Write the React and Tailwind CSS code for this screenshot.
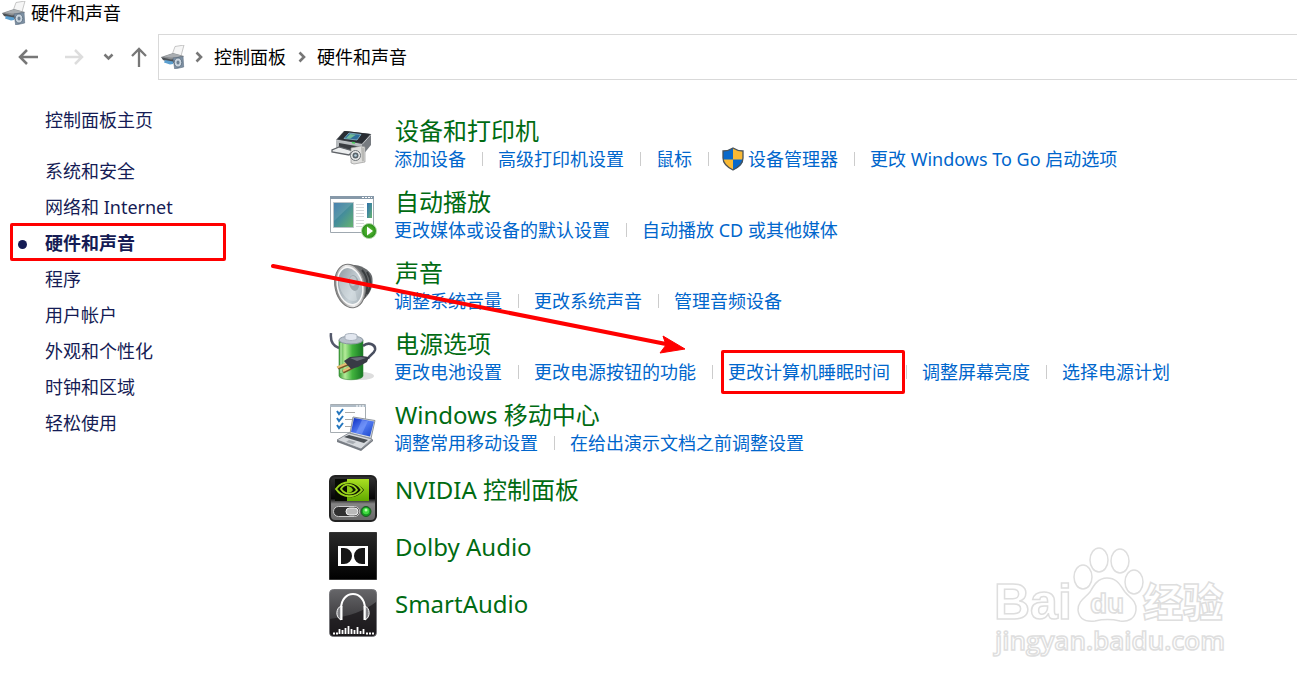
import React from 'react';
import clsx from 'clsx';

const SIDEBAR = ['系统和安全', '网络和 Internet', '硬件和声音', '程序', '用户帐户', '外观和个性化', '时钟和区域', '轻松使用'];
const ACTIVE = '硬件和声音';

// ─── Icons ───────────────────────────────────────────────────────────────────
const HardwareIcon = () => (
  <svg className="w-6 h-6 shrink-0" viewBox="0 0 24 24" aria-hidden="true">
    <path d="M14 1.500 23 0l-3 11-9-1z" fill="#f6f6f6" stroke="#b0b0b0" strokeWidth=".7" />
    <path d="m0 12 12-4 11 3-3 4-10 1z" fill="#8b8e91" />
    <path d="m0 12 10 2.500 10-1.500v4l-10 1-8-3z" fill="#4c5156" />
    <path d="m3 11.500 9-3 8 2-3 1.500-7 .5z" fill="#a9adb1" />
    <path d="m4 15 8 1.500V19l-3 .5-6-2z" fill="#5b9fd0" />
    <path d="m12 13 10-1.500.7 10.500-9 2z" fill="#7e91a4" stroke="#5f7183" strokeWidth=".6" />
    <ellipse cx="17" cy="17.500" rx="3.800" ry="4.600" fill="#c9d4de" stroke="#526375" strokeWidth=".8" />
    <ellipse cx="17" cy="17.500" rx="1.500" ry="2" fill="#6d7f91" />
  </svg>
);

const PrinterIcon = () => (
  <svg className="w-12 h-12" viewBox="0 0 48 48" aria-hidden="true">
    <path d="m7 20 8-9h2l25 3v3l-9 9z" fill="#44484d" />
    <path d="m9 19 7-8 25 3-8 9z" fill="#292d33" />
    <path d="m20 13 12 1.500-4 5.500-13-1.500z" fill="#2f6f9c" stroke="#9bc7d9" strokeWidth=".7" />
    <path d="m21 14 6 .7-6 4-4-.5z" fill="#72bb99" />
    <path d="m7 20 26 4.500V36L7 31z" fill="#b6babd" />
    <path d="m10 23 20 3.500V34l-20-4z" fill="#3a3d41" />
    <path d="m33 24.500 9-10V25l-9 11z" fill="#777b80" />
    <path d="m10 27-7 3v2l17 3 4-4z" fill="#eceeef" stroke="#5f6368" strokeWidth="1.300" />
    <path d="m7 20 26 4.500 9-10" fill="none" stroke="#c4c7ca" />
    <path d="m23 22.500 3 .5" stroke="#43ce54" strokeWidth="1.500" />
    <path d="m22 28 10-2 4 1v15l-11 2-3-1z" fill="#dededc" stroke="#999" strokeWidth=".7" />
    <path d="m32 27 3 1v13l-2 .6z" fill="#b9b9b6" />
    <circle cx="26.500" cy="35.500" r="5" fill="#eee" stroke="#6f7478" />
    <circle cx="26.500" cy="35.500" r="3" fill="#5a646b" />
    <circle cx="26.500" cy="35.500" r="1.300" fill="#b9d0dd" />
  </svg>
);

const AutoPlayIcon = () => (
  <svg className="w-12 h-12" viewBox="0 0 48 48" aria-hidden="true">
    <defs>
      <linearGradient id="apScreen" x1="0" y1="0" x2="1" y2="1">
        <stop offset="0" stopColor="#2f70a5" /><stop offset=".5" stopColor="#468f99" /><stop offset="1" stopColor="#67b56c" />
      </linearGradient>
      <radialGradient id="apPlay"><stop offset="0" stopColor="#68c63d" /><stop offset="1" stopColor="#258c17" /></radialGradient>
    </defs>
    <path d="M1.500 5.500h43v36h-43z" fill="#fff" stroke="#9fa8b0" />
    <path d="M1 5h44v3H1z" fill="#8799a9" />
    <path d="M33 6.500h10" stroke="#fff" strokeDasharray="2 1" />
    <path d="M4.500 11.500h20v25h-20z" fill="url(#apScreen)" stroke="#b9c4ca" />
    <path d="M5 12h19L5 30z" fill="#fff" opacity=".12" />
    <path d="M27 13.500h8M27 16.500h8M27 19.500h8M27 22.500h8M27 25.500h8M27 29.500h8M27 32.500h8M27 35.500h6" stroke="#d6d9db" />
    <path d="M38 12h5v15h-5z" fill="url(#apScreen)" />
    <circle cx="40" cy="40" r="7.500" fill="url(#apPlay)" stroke="#b5d6a9" />
    <path d="m38 35.500 6 4.500-6 4.500z" fill="#fff" />
  </svg>
);

const SpeakerIcon = () => (
  <svg className="w-12 h-12" viewBox="0 0 48 48" aria-hidden="true">
    <defs>
      <linearGradient id="spRim"><stop offset="0" stopColor="#818181" /><stop offset=".5" stopColor="#eee" /><stop offset="1" stopColor="#999" /></linearGradient>
      <linearGradient id="spCone" x1="0" y1="0" x2="1" y2="1"><stop offset="0" stopColor="#879198" /><stop offset=".6" stopColor="#c6d0d6" /><stop offset="1" stopColor="#a0abb1" /></linearGradient>
    </defs>
    <path d="M20 3c10-1 20 4 23 11 2 8-1 18-9 24l-8 5z" fill="#686b6d" />
    <path d="M33 8c7 8 7 20 1 29M38 10c5 8 4 16 0 22" fill="none" stroke="#3b3e40" strokeWidth="2" />
    <ellipse cx="21" cy="24" rx="15" ry="22" transform="rotate(-12 21 24)" fill="url(#spRim)" stroke="#777" />
    <ellipse cx="21" cy="24" rx="12.500" ry="19" transform="rotate(-12 21 24)" fill="url(#spCone)" stroke="#f7f7f7" strokeWidth="1.500" />
    <path d="m10 15 15 8 3 15c-9 5-20-10-18-23z" fill="#e3eaee" opacity=".4" />
    <ellipse cx="25" cy="21" rx="5" ry="8" transform="rotate(-12 25 21)" fill="#9ea8ae" />
    <ellipse cx="24" cy="19" rx="3.500" ry="5" fill="#bdc5ca" />
  </svg>
);

const BatteryIcon = () => (
  <svg className="w-12 h-12" viewBox="0 0 48 48" aria-hidden="true">
    <defs>
      <linearGradient id="batBody"><stop offset="0" stopColor="#399c34" /><stop offset=".25" stopColor="#b5eb9a" /><stop offset=".55" stopColor="#42b43e" /><stop offset="1" stopColor="#167623" /></linearGradient>
    </defs>
    <ellipse cx="32" cy="43" rx="13" ry="4" fill="#ddd" />
    <path d="M2 0c-1 9 2 13 8 15" fill="none" stroke="#54596b" strokeWidth="2.500" />
    <path d="M10 7v36c1 5 23 5 24 0V7z" fill="url(#batBody)" stroke="#388837" strokeWidth=".6" />
    <ellipse cx="22" cy="7" rx="12" ry="4" fill="#b8c1cb" stroke="#8c98a3" />
    <path d="M16 6V2c2-2 10-2 12 0v4c-3 2-9 2-12 0z" fill="#e2e7ef" stroke="#a9b2bd" />
    <path d="M12 10v30" stroke="#c8f3b7" strokeWidth="1.500" opacity=".7" />
    <path d="M34 13c6-5 13-1 12 4-1 4-6 5-7 9" fill="none" stroke="#4a4f60" strokeWidth="2.500" />
    <path d="m19 31-10 4M24 34l-10 5" stroke="#785527" strokeWidth="3.500" />
    <path d="m19 30-11 4.500M24 33l-10 5" stroke="#e5bd75" strokeWidth="2" />
    <path d="m15 28 6-4 12-1 7 1-2 5-9 5-7 2z" fill="#383b45" />
    <path d="m21 25 11-1 5 1-9 3z" fill="#696e79" />
  </svg>
);

const MobilityIcon = () => (
  <svg className="w-12 h-12" viewBox="0 0 48 48" aria-hidden="true">
    <defs>
      <linearGradient id="mobScreen" x1="0" y1="0" x2="1" y2="1"><stop offset="0" stopColor="#092bc0" /><stop offset=".5" stopColor="#527af1" /><stop offset="1" stopColor="#1744c9" /></linearGradient>
    </defs>
    <path d="M1.500.500h35v28h-35z" fill="#fff" stroke="#a6adb2" />
    <path d="M1 1h36v2H1z" fill="#aebbc6" />
    <path d="M27 2h8" stroke="#fff" strokeDasharray="2 1" />
    <path d="M16 8.500h10M16 15.500h9M16 22.500h7" stroke="#aaa" />
    <path d="m8 7 2 3 4-5M8 14l2 3 4-5M8 21l2 3 4-5" fill="none" stroke="#2476be" strokeWidth="2" />
    <path d="m24 13 22 3.500-4 18-21-5z" fill="#d5d9df" stroke="#8e959d" />
    <path d="m25 14 20 3.500-4 15L22 28z" fill="url(#mobScreen)" />
    <path d="m33 16 6 1-6 13-6-1.300z" fill="#91adff" opacity=".45" />
    <path d="m20 29 23 6-11 10L8 36z" fill="#d6d9dd" stroke="#8c9198" />
    <path d="m20 31 19 5-4 3-20-6z" fill="#4b5056" />
    <path d="m20 36 7 2-3 2-7-2z" fill="#a7acb2" />
    <path d="m8 36 24 9 12-10v2L32 47 8 38z" fill="#777c83" />
  </svg>
);

const NvidiaIcon = () => (
  <svg className="w-12 h-12" viewBox="0 0 48 48" aria-hidden="true">
    <defs>
      <linearGradient id="nvBase" x1="0" y1="0" x2="0" y2="1"><stop offset="0" stopColor="#333" /><stop offset=".5" stopColor="#050505" /><stop offset=".62" stopColor="#858585" /><stop offset="1" stopColor="#666" /></linearGradient>
      <linearGradient id="nvGreen" x1="0" y1="0" x2="0" y2="1"><stop offset="0" stopColor="#a9df22" /><stop offset="1" stopColor="#62a900" /></linearGradient>
    </defs>
    <rect x="1" y="1" width="46" height="45" rx="5" fill="url(#nvBase)" stroke="#222" strokeWidth="2" />
    <path d="M6 4h34v22H6z" fill="#070b03" />
    <path d="M18 4h22v22H18z" fill="url(#nvGreen)" />
    <path d="M7 14c7-8 19-9 27 1-7 10-19 9-27-1z" fill="#080d03" />
    <path d="M18 8c7-1 12 1 17 7-5 6-11 8-17 7z" fill="#0c1403" />
    <path d="M7 14c7-9 20-9 26 1-7 9-20 8-26-1z" fill="none" stroke="#9bd41c" strokeWidth="2" />
    <path d="M12 14c3-6 12-6 16 1-4 5-12 5-16-1z" fill="none" stroke="#9bd41c" strokeWidth="1.800" />
    <path d="M18 11c3 0 5 2 6 4-1 2-3 3-6 3z" fill="#8ac814" />
    <rect x="4.500" y="31.500" width="26" height="10" rx="5" fill="#303030" stroke="#ccc" />
    <rect x="17" y="33" width="12" height="7" rx="3.500" fill="#bababa" stroke="#f6f6f6" />
    <circle cx="37" cy="36.500" r="5" fill="#159822" stroke="#1d5922" />
    <circle cx="37" cy="36" r="3.200" fill="#42da41" />
    <circle cx="37" cy="35" r="1.500" fill="#b6ffad" />
  </svg>
);

const DolbyIcon = () => (
  <svg className="w-12 h-12" viewBox="0 0 48 48" aria-hidden="true">
    <defs><linearGradient id="dolby" x1="0" y1="0" x2="0" y2="1"><stop offset="0" stopColor="#292929" /><stop offset="1" stopColor="#000" /></linearGradient></defs>
    <path d="M.5.500h47v47H.5z" fill="url(#dolby)" stroke="#333" />
    <path d="M9 14h30v20H9z" fill="#fff" />
    <path d="M12 16h3a8 8 0 0 1 0 16h-3zM36 16h-3a8 8 0 0 0 0 16h3z" fill="#151515" />
  </svg>
);

const SmartAudioIcon = () => (
  <svg className="w-12 h-12" viewBox="0 0 48 48" aria-hidden="true">
    <defs><linearGradient id="smart" x1="0" y1="0" x2="0" y2="1"><stop offset="0" stopColor="#666669" /><stop offset="1" stopColor="#252326" /></linearGradient></defs>
    <rect x=".5" y=".5" width="47" height="47" rx="4" fill="url(#smart)" stroke="#77777b" />
    <path d="M47 13c-12 9-25 14-46 17v13c0 3 1 4 4 4h38c3 0 4-2 4-4z" fill="#151316" opacity=".65" />
    <path d="M12 20C12 0 36 0 36 20" fill="none" stroke="#fff" strokeWidth="2" />
    <path d="M12 17c-5 2-6 11 0 14zM36 17c5 2 6 11 0 14z" fill="#828286" stroke="#fff" />
    <path d="M12.500 17v14M35.500 17v14" stroke="#fff" strokeWidth="2" />
    <path d="M4 44.500h2M7 44.500h2M10.500 45v-5M13.500 45v-4M16.500 45v-6M19.500 45v-8M22.500 45v-5M25.500 45v-4M28.500 45v-7M31.500 45v-3M34.500 45v-5M37 44.500h2M40 44.500h2M43 44.500h2" stroke="#fff" strokeWidth="1.800" />
  </svg>
);

const ShieldIcon = () => (
  <svg className="w-6 h-6 shrink-0 overflow-visible" viewBox="2 0 24 24" aria-hidden="true">
    <path d="M11 1c3 2 6 3 10 3v7c0 6-4 9-10 12C5 20 1 17 1 11V4c4 0 7-1 10-3z" fill="#f9b934" />
    <path d="M11 1v11.500H1V4c4 0 7-1 10-3zM11 12.500h10c0 5-4 8-10 10.500z" fill="#0868ca" />
    <path d="M11 1c3 2 6 3 10 3v7c0 6-4 9-10 12C5 20 1 17 1 11V4c4 0 7-1 10-3z" fill="none" stroke="#49525a" strokeWidth="1.300" />
  </svg>
);

const Chevron = () => (
  <svg className="w-2 h-3 shrink-0" viewBox="0 0 8 12" aria-hidden="true">
    <path d="m1.500 1.500 4.500 4.500-4.500 4.500" fill="none" stroke="#777" strokeWidth="2.600" />
  </svg>
);

const CATEGORIES = [
  { title: '设备和打印机', Icon: PrinterIcon, links: [{ label: '添加设备' }, { label: '高级打印机设置' }, { label: '鼠标' }, { label: '设备管理器', shield: true }, { label: '更改 Windows To Go 启动选项' }] },
  { title: '自动播放', Icon: AutoPlayIcon, links: [{ label: '更改媒体或设备的默认设置' }, { label: '自动播放 CD 或其他媒体' }] },
  { title: '声音', Icon: SpeakerIcon, links: [{ label: '调整系统音量' }, { label: '更改系统声音' }, { label: '管理音频设备' }] },
  { title: '电源选项', Icon: BatteryIcon, links: [{ label: '更改电池设置' }, { label: '更改电源按钮的功能' }, { label: '更改计算机睡眠时间', marked: true }, { label: '调整屏幕亮度' }, { label: '选择电源计划' }] },
  { title: 'Windows 移动中心', Icon: MobilityIcon, links: [{ label: '调整常用移动设置' }, { label: '在给出演示文档之前调整设置' }] },
];

const APPS = [
  { title: 'NVIDIA 控制面板', Icon: NvidiaIcon },
  { title: 'Dolby Audio', Icon: DolbyIcon },
  { title: 'SmartAudio', Icon: SmartAudioIcon },
];

const Category = ({ title, Icon, links }) => (
  <section className="flex gap-[17px]">
    <div className="pt-1 h-[58px] shrink-0"><Icon /></div>
    <div>
      <h2 className="pl-px text-2xl leading-[30px] text-[#006b12]"><a href="#" className="hover:underline">{title}</a></h2>
      <ul className="flex items-center h-[26px]">
        {links.map(({ label, shield, marked }, i) => (
          <li key={label} className="flex items-center whitespace-nowrap">
            {i > 0 && <span className="w-px h-[14px] ml-4 mr-[15px] bg-[#ccc]" />}
            <a href="#" className="relative flex items-center text-[#0066cc] hover:underline">
              {shield && <ShieldIcon />}
              {label}
              {marked && <span className="absolute -left-[7px] -right-[15px] -top-2 -bottom-2 border-3 border-[#ff0000] rounded-xs" />}
            </a>
          </li>
        ))}
      </ul>
    </div>
  </section>
);

// ─── Corner watermark ────────────────────────────────────────────────────────
const Watermark = () => (
  <svg className="absolute top-[545px] right-[56px] w-[250px] h-[116px]" viewBox="0 0 250 116" fill="#fff" stroke="#dedede" strokeWidth="1.500" role="img" aria-label="Baidu 经验">
    <ellipse cx="92" cy="32" rx="9" ry="12" />
    <ellipse cx="108" cy="15" rx="9" ry="12" />
    <ellipse cx="129" cy="16" rx="9" ry="12" />
    <ellipse cx="143" cy="37" rx="9" ry="12" />
    <path d="M116 33c10 0 13 7 18 14 5 6 12 9 11 18-1 9-8 12-16 11-9-2-16-2-25 0-9 1-16-2-17-11 0-9 7-12 12-18 4-7 8-14 17-14z" />
    <text x="3" y="74" fontFamily="Liberation Sans" fontWeight="700" fontSize="50">Bai</text>
    <text x="99" y="68" fontFamily="Liberation Sans" fontWeight="700" fontSize="28">du</text>
    <text x="152" y="72" fontFamily="Noto Sans CJK SC" fontWeight="900" fontSize="40">经验</text>
    <text x="4" y="105" fontFamily="Open Sans" fontWeight="600" fontSize="26">jingyan.baidu.com</text>
  </svg>
);

export default function App() {
  return (
    <div className="relative min-h-screen overflow-hidden bg-white text-lg leading-7 font-['Noto_Sans','Noto_Sans_CJK_SC',sans-serif]">

      {/* Title bar */}
      <header className="flex items-center gap-[5px] h-[26px] pl-0.5 text-black">
        <HardwareIcon />
        <h1>硬件和声音</h1>
      </header>

      {/* Navigation + address bar */}
      <div className="flex pt-2">
        <nav className="flex items-center w-[158px] shrink-0 pl-[18px] text-[#777]">
          <button type="button" aria-label="后退">
            <svg className="w-5 h-5" viewBox="0 0 20 20" fill="none" stroke="currentColor" strokeWidth="2.500"><path d="M20 10H2M9 3l-7 7 7 7" /></svg>
          </button>
          <button type="button" aria-label="前进" className="ml-[26px] text-[#ddd]">
            <svg className="w-5 h-5" viewBox="0 0 20 20" fill="none" stroke="currentColor" strokeWidth="2.500"><path d="M1 10h17M11 3l7 7-7 7" /></svg>
          </button>
          <button type="button" aria-label="最近的位置" className="ml-[19px]">
            <svg className="w-[11px] h-5" viewBox="0 0 11 20" fill="none" stroke="currentColor" strokeWidth="2.500"><path d="m1.500 7.500 4 4 4-4" /></svg>
          </button>
          <button type="button" aria-label="向上" className="ml-4">
            <svg className="w-[18px] h-5" viewBox="0 0 18 20" fill="none" stroke="currentColor" strokeWidth="2.300"><path d="M9 20V2M2 9l7-7 7 7" /></svg>
          </button>
        </nav>
        <div className="flex items-center flex-1 h-[46px] pl-0.5 border border-r-0 border-[#d9d9d9] text-black">
          <HardwareIcon />
          <span className="flex ml-[10px] mr-[11px]"><Chevron /></span>
          <a href="#">控制面板</a>
          <span className="flex ml-3 mr-[11px]"><Chevron /></span>
          <a href="#">硬件和声音</a>
        </div>
      </div>

      <div className="flex">
        {/* Sidebar */}
        <aside className="w-[329px] shrink-0 pt-[26px] pl-[45px] text-[#151c55]">
          <a href="#" className="block">控制面板主页</a>
          <ul className="flex flex-col gap-2 pt-[23px]">
            {SIDEBAR.map(item => (
              <li key={item} className={clsx('relative', item === ACTIVE && 'font-bold')}>
                {item === ACTIVE && (
                  <>
                    <span className="absolute top-[11px] -left-[27px] w-[9px] h-[9px] rounded-full bg-[#151c55]" />
                    <span className="absolute -left-[35px] -top-[6px] w-[216px] h-[38px] border-3 border-[#ff0000] rounded-xs" />
                  </>
                )}
                <a href="#" className="relative">{item}</a>
              </li>
            ))}
          </ul>
        </aside>

        {/* Categories */}
        <main className="flex-1 pt-9">
          <div className="flex flex-col gap-[13px]">
            {CATEGORIES.map(c => <Category key={c.title} {...c} />)}
          </div>
          <div className="flex flex-col gap-[9px] pt-[17px]">
            {APPS.map(({ title, Icon }) => (
              <section key={title} className="flex gap-[18px]">
                <Icon />
                <h2 className="text-2xl leading-[30px] text-[#006b12]"><a href="#" className="hover:underline">{title}</a></h2>
              </section>
            ))}
          </div>
        </main>
      </div>

      {/* Pointer to the sleep settings link */}
      <svg className="absolute top-[260px] left-[268px] w-[420px] h-24 pointer-events-none" viewBox="0 0 420 96" aria-hidden="true">
        <path d="m5 6 398 79" stroke="#ff0000" strokeWidth="4" strokeLinecap="round" />
        <path d="m417 89-25 4 6-8-3-9z" fill="#ff0000" stroke="#ff0000" />
      </svg>

      <Watermark />
    </div>
  );
}
